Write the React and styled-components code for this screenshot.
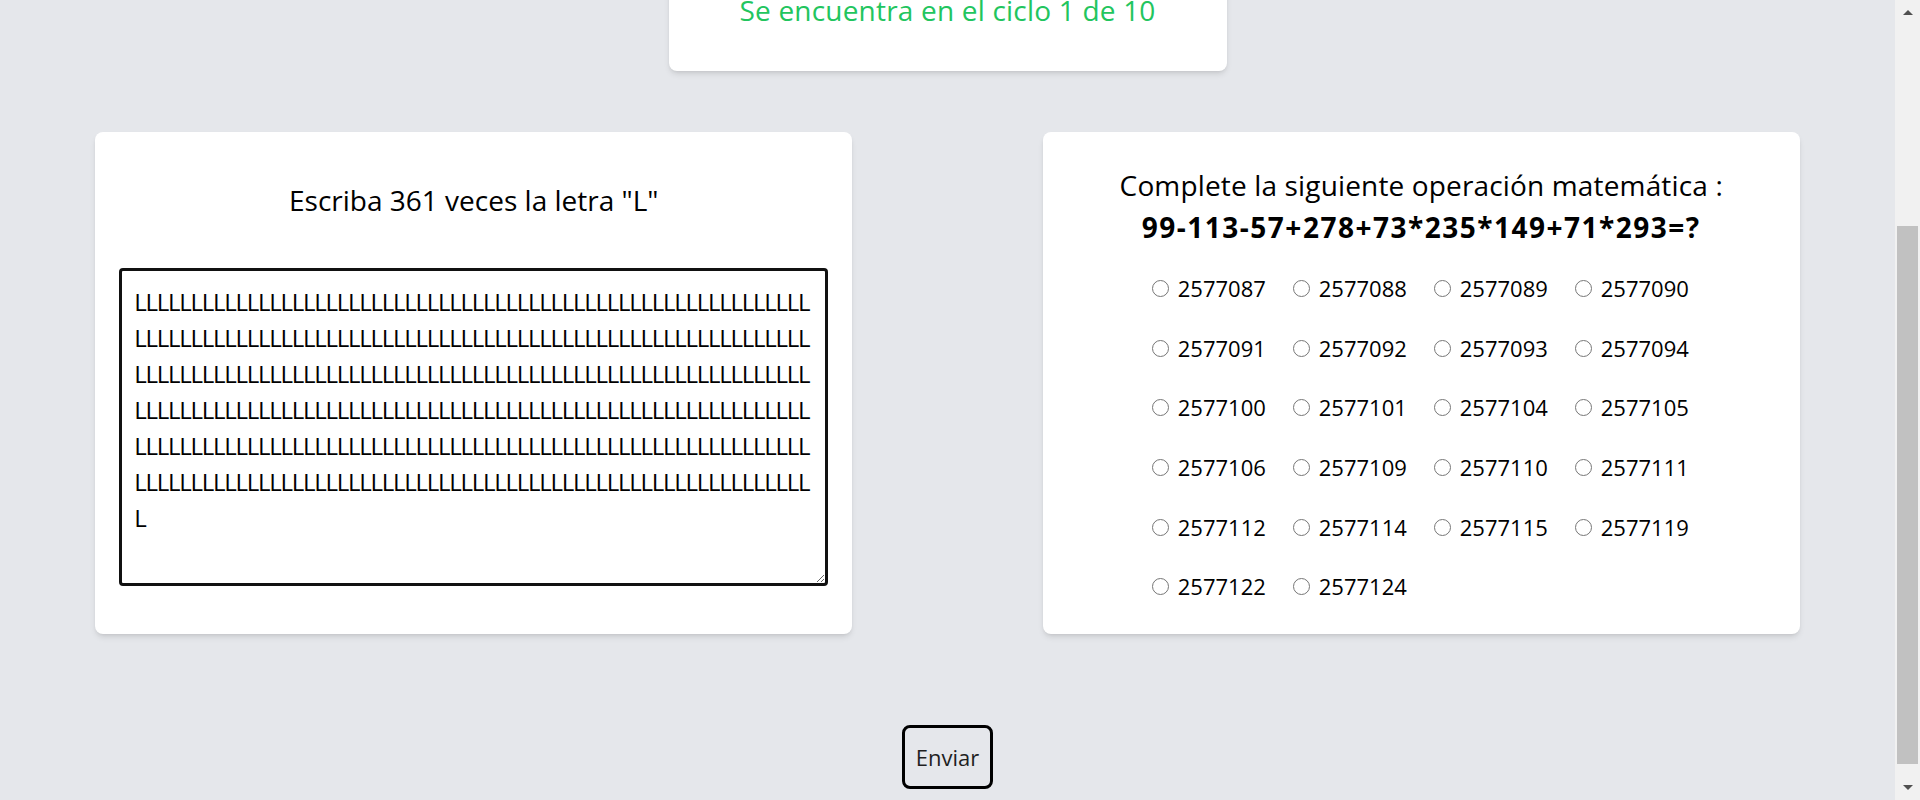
import React, { useLayoutEffect, useMemo, useRef } from "react";
import styled, { createGlobalStyle } from "styled-components";

// how far the page is scrolled in the capture, and the look of the fake scrollbar
const SCROLL_TOP = 89;
const THUMB = { top: 201, height: 538 };
// advance of each "L" in the answer box (60 letters per row)
const L_ADVANCE = 11.25;

const OPTIONS = [
  2577087, 2577088, 2577089, 2577090, 2577091, 2577092, 2577093, 2577094, 2577100, 2577101, 2577104,
  2577105, 2577106, 2577109, 2577110, 2577111, 2577112, 2577114, 2577115, 2577119, 2577122, 2577124,
];

const GlobalStyle = createGlobalStyle`
  * {
    box-sizing: border-box;
  }

  html,
  body {
    margin: 0;
    padding: 0;
    overflow: hidden;
  }

  body {
    font-family: "Open Sans", "Noto Sans", sans-serif;
    color: #000;
    background: #e5e7eb;
  }
`;

const Screen = styled.div`
  display: flex;
  width: 100%;
  height: 800px;
`;

const Viewport = styled.main`
  flex: 1;
  min-width: 0;
  height: 100%;
  overflow: hidden;
  background: #e5e7eb;
`;

const Page = styled.div`
  display: flex;
  flex-direction: column;
  align-items: center;
  padding: 40px 0 56px;
`;

const Panel = styled.section`
  background: #fff;
  border-radius: 8px;
  box-shadow: 0 4px 6px -1px rgba(0, 0, 0, 0.1), 0 2px 4px -2px rgba(0, 0, 0, 0.1);
`;

const CycleCard = styled(Panel)`
  width: 558px;
  padding: 39px 0 41px;
  text-align: center;
`;

const CycleText = styled.p`
  margin: 0;
  font-size: 28px;
  line-height: 40px;
  letter-spacing: 0.2px;
  color: #22c55e;
`;

const Challenges = styled.div`
  display: grid;
  grid-template-columns: 1fr 1fr;
  justify-items: center;
  width: 100%;
  margin-top: 61px;
`;

const Card = styled(Panel)`
  width: 757px;
  display: flex;
  flex-direction: column;
  align-items: center;
  justify-content: center;
  padding: ${({ $tight }) => ($tight ? "32px 24px 30px" : "24px")};
`;

const Title = styled.h2`
  margin: 0 0 48px;
  font-size: 28px;
  line-height: 40px;
  font-weight: 400;
  text-align: center;
`;

const AnswerBox = styled.textarea`
  display: block;
  width: 100%;
  height: 318px;
  margin: 0;
  padding: 13px 12px;
  border: 3px solid #111;
  border-radius: 4px;
  font-family: "Open Sans", "Noto Sans", sans-serif;
  font-size: 24px;
  line-height: 36px;
  color: #000;
  background: #fff;
  outline: none;
`;

const Prompt = styled.h2`
  margin: 0;
  font-size: 28px;
  line-height: 42px;
  font-weight: 400;
  letter-spacing: 0.15px;
  text-align: center;

  strong {
    display: block;
    font-weight: 700;
    letter-spacing: 1.5px;
  }
`;

const Options = styled.div`
  display: grid;
  grid-template-columns: repeat(4, 116px);
  column-gap: 25px;
  row-gap: 24.7px;
  margin-top: 23px;
`;

const Option = styled.label`
  display: flex;
  align-items: center;
  gap: 9px;
  font-size: 22px;
  line-height: 35px;
  cursor: pointer;

  input {
    width: 17px;
    height: 17px;
    margin: 0;
  }
`;

const SubmitRow = styled.div`
  display: flex;
  justify-content: center;
  margin-top: 91px;
`;

const SubmitButton = styled.button`
  padding: 11.5px 11px;
  border: 3px solid #000;
  border-radius: 8px;
  background: transparent;
  font-family: "Open Sans", "Noto Sans", sans-serif;
  font-size: 22px;
  line-height: 35px;
  color: #1f1f1f;
  cursor: pointer;
`;

const Scrollbar = styled.div`
  flex: none;
  width: 25px;
  display: flex;
  flex-direction: column;
  background: #f1f1f1;
`;

const ScrollButton = styled.div`
  height: 25px;
  display: flex;
  align-items: center;
  justify-content: center;

  &::before {
    content: "";
    border-left: 5.5px solid transparent;
    border-right: 5.5px solid transparent;
    ${({ $dir }) => ($dir === "up" ? "border-bottom: 5px solid #505050;" : "border-top: 5px solid #505050;")}
  }
`;

const Track = styled.div`
  flex: 1;
  padding: 0 2px;
`;

const Thumb = styled.div`
  margin-top: ${({ $top }) => $top}px;
  height: ${({ $height }) => $height}px;
  background: #c1c1c1;
`;

function useLetterSpacing(font, target) {
  return useMemo(() => {
    const ctx = document.createElement("canvas").getContext("2d");
    ctx.font = font;
    return target - ctx.measureText("L").width;
  }, [font, target]);
}

export default function App() {
  const viewport = useRef(null);
  const spacing = useLetterSpacing('24px "Open Sans"', L_ADVANCE);

  useLayoutEffect(() => {
    if (viewport.current) viewport.current.scrollTop = SCROLL_TOP;
  }, []);

  return (
    <>
      <GlobalStyle />
      <Screen>
        <Viewport ref={viewport}>
          <Page>
            <CycleCard>
              <CycleText>Se encuentra en el ciclo 1 de 10</CycleText>
            </CycleCard>

            <Challenges>
              <Card>
                <Title>Escriba 361 veces la letra "L"</Title>
                <AnswerBox defaultValue={"L".repeat(361)} spellCheck={false} style={{ letterSpacing: `${spacing}px` }} />
              </Card>

              <Card $tight>
                <Prompt>
                  Complete la siguiente operación matemática :
                  <strong>99-113-57+278+73*235*149+71*293=?</strong>
                </Prompt>
                <Options>
                  {OPTIONS.map((value) => (
                    <Option key={value}>
                      <input type="radio" name="operacion" value={value} />
                      {value}
                    </Option>
                  ))}
                </Options>
              </Card>
            </Challenges>

            <SubmitRow>
              <SubmitButton type="button">Enviar</SubmitButton>
            </SubmitRow>
          </Page>
        </Viewport>

        <Scrollbar>
          <ScrollButton $dir="up" />
          <Track>
            <Thumb $top={THUMB.top} $height={THUMB.height} />
          </Track>
          <ScrollButton $dir="down" />
        </Scrollbar>
      </Screen>
    </>
  );
}
